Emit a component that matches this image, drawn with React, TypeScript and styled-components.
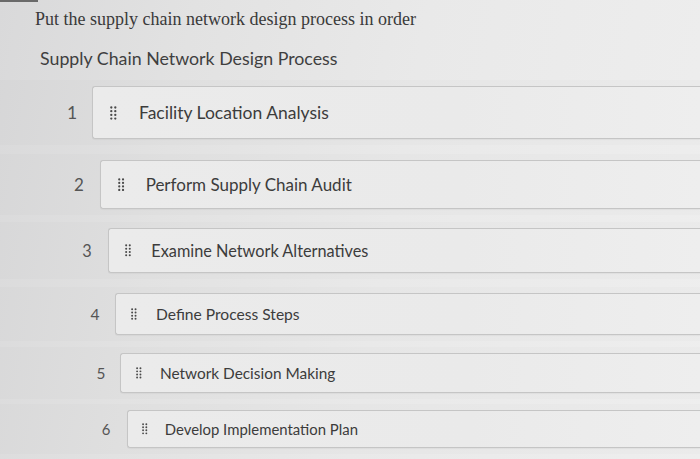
import React from "react";
import styled, { createGlobalStyle } from "styled-components";

const Global = createGlobalStyle`
  html, body { margin: 0; padding: 0; }
  body {
    width: 700px;
    height: 459px;
    overflow: hidden;
    background: linear-gradient(100deg, #d9d9da 0%, #e2e2e2 25%, #e9e9e9 55%, #eeeeee 100%);
    font-family: Lato, "Noto Sans", sans-serif;
  }
`;

const Page = styled.div`
  position: relative;
  width: 700px;
  height: 459px;
  overflow: hidden;
`;

const TopBar = styled.div`
  width: 38px;
  height: 2px;
  background: #6a6a6a;
`;

const Question = styled.div`
  font-family: "Liberation Serif", "Times New Roman", serif;
  font-size: 18px;
  color: #3a3a3a;
  padding: 6px 0 0 35px;
  line-height: 22px;
`;

const Heading = styled.div`
  font-family: Lato, sans-serif;
  font-size: 17.8px;
  color: #3f3f3f;
  padding: 16px 0 0 40px;
  line-height: 24px;
`;

const List = styled.div`
  display: flex;
  flex-direction: column;
  padding-top: 16px;
`;

const Row = styled.div<{ $indent: number; $gap: number }>`
  display: flex;
  align-items: stretch;
  padding-left: ${(p) => p.$indent}px;
  margin-bottom: ${(p) => p.$gap}px;
  position: relative;
  &::before {
    content: "";
    position: absolute;
    left: 0;
    right: 0;
    top: -6px;
    bottom: -6px;
    background: rgba(0, 0, 0, 0.012);
    z-index: 0;
  }
`;

const Num = styled.div<{ $w: number; $size: number }>`
  width: ${(p) => p.$w}px;
  display: flex;
  align-items: center;
  justify-content: center;
  font-size: ${(p) => p.$size}px;
  color: #555555;
  position: relative;
  z-index: 1;
`;

const Card = styled.div<{ $h: number; $size: number; $pad: number }>`
  flex: 1;
  height: ${(p) => p.$h}px;
  box-sizing: border-box;
  border: 1px solid #c5c5c5;
  border-right: none;
  border-radius: 3px 0 0 3px;
  background: linear-gradient(90deg, #ebebeb 0%, #eaeaea 60%, #eeeeee 100%);
  display: flex;
  align-items: center;
  padding-left: ${(p) => p.$pad}px;
  font-size: ${(p) => p.$size}px;
  color: #3c3c3c;
  position: relative;
  z-index: 1;
  box-shadow: 0 1px 1px rgba(0, 0, 0, 0.04);
`;

const HandleWrap = styled.span<{ $gap: number }>`
  display: inline-flex;
  margin-right: ${(p) => p.$gap}px;
`;

const Label = styled.span`
  white-space: nowrap;
`;

function Handle({ scale }: { scale: number }) {
  const w = 7 * scale;
  const h = 14 * scale;
  const dots = [];
  for (let r = 0; r < 4; r++) {
    for (let c = 0; c < 2; c++) {
      dots.push(<circle key={`${r}-${c}`} cx={1.3 + c * 4} cy={1.5 + r * 3.7} r={1.15} fill="#4a4a4a" />);
    }
  }
  return (
    <svg width={w} height={h} viewBox="0 0 7 14">
      {dots}
    </svg>
  );
}

const rows = [
  { n: 1, label: "Facility Location Analysis", indent: 52, numW: 40, h: 53, size: 17.5, pad: 17, hgap: 22, scale: 1, gap: 21 },
  { n: 2, label: "Perform Supply Chain Audit", indent: 58, numW: 42, h: 49, size: 17, pad: 17, hgap: 21, scale: 0.95, gap: 19 },
  { n: 3, label: "Examine Network Alternatives", indent: 66, numW: 42, h: 45, size: 16.3, pad: 16, hgap: 20, scale: 0.9, gap: 20 },
  { n: 4, label: "Define Process Steps", indent: 75, numW: 40, h: 42, size: 15.6, pad: 15, hgap: 19, scale: 0.86, gap: 18 },
  { n: 5, label: "Network Decision Making", indent: 82, numW: 38, h: 40, size: 15.4, pad: 15, hgap: 18, scale: 0.84, gap: 17 },
  { n: 6, label: "Develop Implementation Plan", indent: 85, numW: 42, h: 38, size: 14.9, pad: 14, hgap: 17, scale: 0.82, gap: 0 },
];

export default function App() {
  return (
    <>
      <Global />
      <Page>
        <TopBar />
        <Question>Put the supply chain network design process in order</Question>
        <Heading>Supply Chain Network Design Process</Heading>
        <List>
          {rows.map((r) => (
            <Row key={r.n} $indent={r.indent} $gap={r.gap}>
              <Num $w={r.numW} $size={r.size}>{r.n}</Num>
              <Card $h={r.h} $size={r.size} $pad={r.pad}>
                <HandleWrap $gap={r.hgap}>
                  <Handle scale={r.scale} />
                </HandleWrap>
                <Label>{r.label}</Label>
              </Card>
            </Row>
          ))}
        </List>
      </Page>
    </>
  );
}
